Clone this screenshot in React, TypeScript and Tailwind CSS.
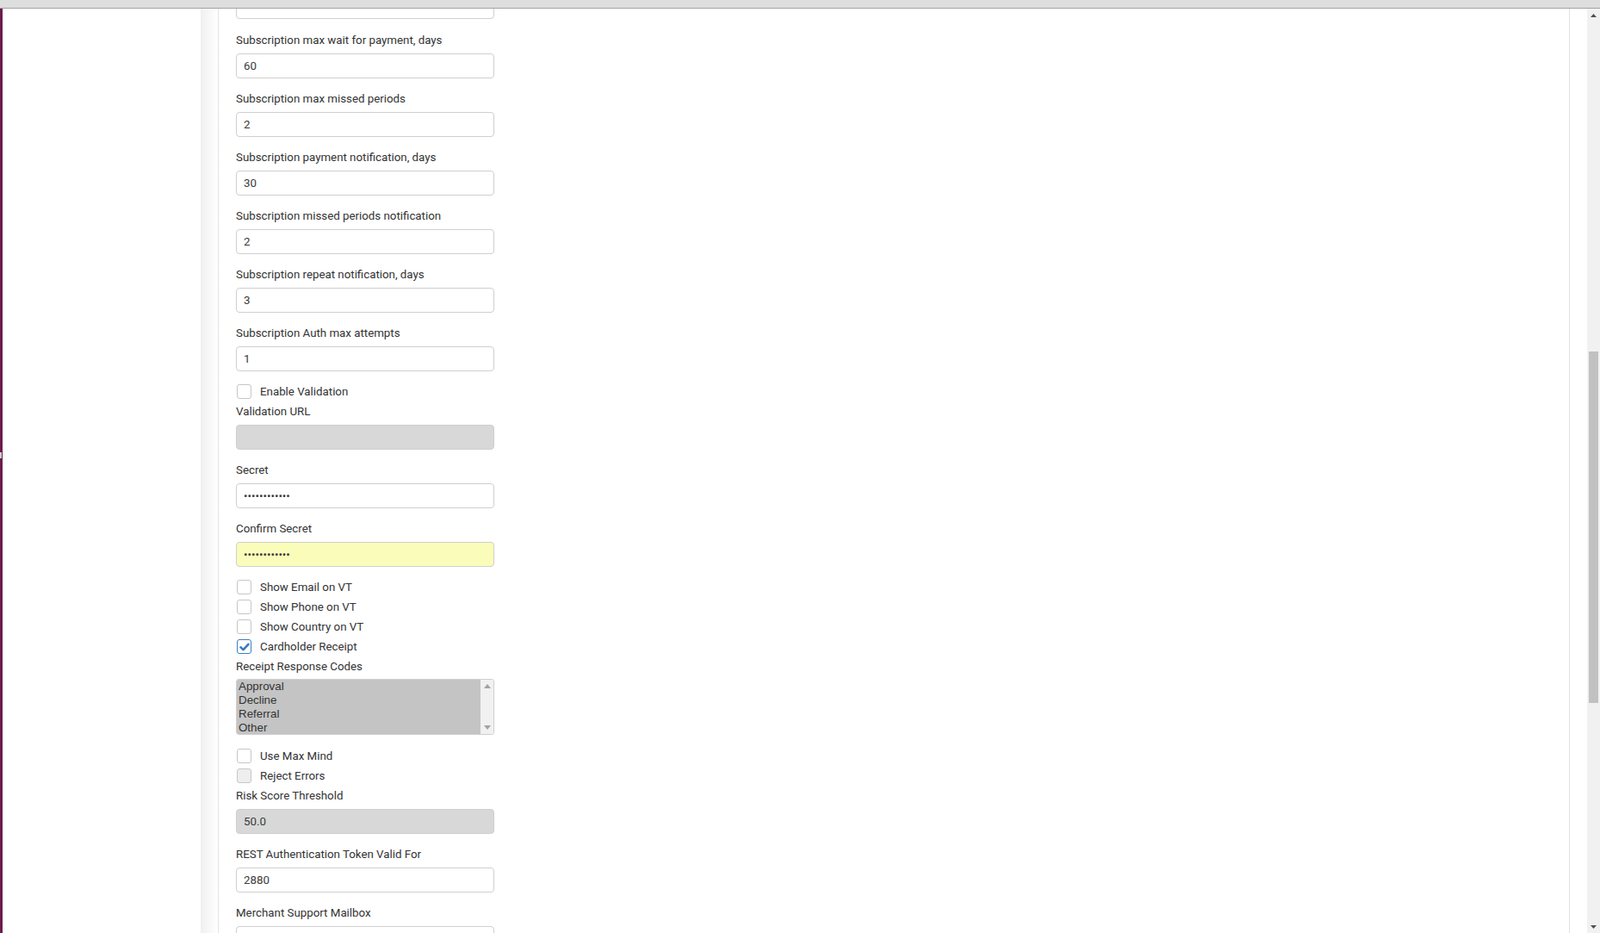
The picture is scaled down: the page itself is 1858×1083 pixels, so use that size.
import React from "react";

function Field({ label, value, disabled, type, yellow }: { label: string; value?: string; disabled?: boolean; type?: string; yellow?: boolean }) {
  const bg = disabled ? "bg-[#d8d8d8]" : yellow ? "bg-[#fafcba]" : "bg-white";
  return (
    <div className="mb-[14px]">
      <div className="text-[13.3px] leading-[19px] text-[#333] mb-[6px]">{label}</div>
      <input
        readOnly
        type={type || "text"}
        value={value || ""}
        className={`block w-full h-[29px] border border-[#cfcfcf] rounded-[4px] px-[8px] text-[13.3px] text-[#3a3a3a] font-['Roboto'] outline-none ${bg}`}
      />
    </div>
  );
}

function Check({ label, checked, disabled }: { label: string; checked?: boolean; disabled?: boolean }) {
  return (
    <div className="flex h-[23px]">
      <div
        className={`ml-[1px] mt-[1px] w-[17px] h-[17px] rounded-[3px] border flex items-center justify-center ${
          checked ? "border-[#3f7fc1] bg-white" : disabled ? "border-[#c6c6c6] bg-[#eeeeee]" : "border-[#c6c6c6] bg-white"
        }`}
      >
        {checked && (
          <svg width="12" height="10" viewBox="0 0 12 10">
            <path d="M1.6 5.4 L4.6 8.2 L10.4 1.8" fill="none" stroke="#3b7cc0" strokeWidth="2.6" strokeLinecap="round" strokeLinejoin="round" />
          </svg>
        )}
      </div>
      <span className="ml-[10px] text-[13.3px] leading-[19px] text-[#333]">{label}</span>
    </div>
  );
}

export default function App() {
  return (
    <div className="w-[1858px] h-[1083px] overflow-hidden bg-white font-['Roboto'] flex flex-col">
      <div className="h-[10px] shrink-0 bg-[#dedede] border-b border-[#a0a0a0]" />
      <div className="flex flex-1 min-h-0">
        <div className="w-[3px] shrink-0 bg-[#6d1b4d] flex flex-col">
          <div className="mt-[515px] h-[7px] w-[2px] bg-[#cfcfcf]" />
        </div>
        <div className="w-[230px] shrink-0 bg-white" />
        <div className="w-[20px] shrink-0 bg-gradient-to-r from-[#f0f0f0] to-white" />
        <div className="w-px shrink-0 bg-[#e4e4e4]" />
        <div className="w-[1568px] shrink-0 overflow-hidden pl-[20px]">
          <div className="w-[300px] mt-[-17px]">
            <div className="mb-[15px]">
              <input readOnly value="" className="block w-full h-[29px] border border-[#cfcfcf] rounded-[4px] bg-white outline-none" />
            </div>
            <Field label="Subscription max wait for payment, days" value="60" />
            <Field label="Subscription max missed periods" value="2" />
            <Field label="Subscription payment notification, days" value="30" />
            <Field label="Subscription missed periods notification" value="2" />
            <Field label="Subscription repeat notification, days" value="3" />
            <Field label="Subscription Auth max attempts" value="1" />
            <Check label="Enable Validation" />
            <Field label="Validation URL" disabled />
            <Field label="Secret" type="password" value="abcdefghijkl" />
            <Field label="Confirm Secret" type="password" value="abcdefghijkl" yellow />
            <Check label="Show Email on VT" />
            <Check label="Show Phone on VT" />
            <Check label="Show Country on VT" />
            <Check label="Cardholder Receipt" checked />
            <div className="mb-[15px]">
              <div className="text-[13.3px] leading-[19px] text-[#333] mb-[5px]">Receipt Response Codes</div>
              <div className="h-[65px] border border-[#cfcfcf] rounded-[3px] flex overflow-hidden">
                <div className="flex-1 bg-[#c4c4c4] pl-[2px] font-['Liberation_Sans'] text-[13.33px] leading-[16px] text-[#333]">
                  <div>Approval</div>
                  <div>Decline</div>
                  <div>Referral</div>
                  <div>Other</div>
                </div>
                <div className="w-[15px] bg-[#f1f1f1] flex flex-col justify-between items-center py-[5px]">
                  <svg width="8" height="5" viewBox="0 0 8 5"><path d="M0 5 L4 0 L8 5 Z" fill="#a3a3a3" /></svg>
                  <svg width="8" height="5" viewBox="0 0 8 5"><path d="M0 0 L4 5 L8 0 Z" fill="#a3a3a3" /></svg>
                </div>
              </div>
            </div>
            <Check label="Use Max Mind" />
            <Check label="Reject Errors" disabled />
            <Field label="Risk Score Threshold" value="50.0" disabled />
            <Field label="REST Authentication Token Valid For" value="2880" />
            <Field label="Merchant Support Mailbox" />
          </div>
        </div>
        <div className="w-px shrink-0 bg-[#e2e2e2]" />
        <div className="w-[20px] shrink-0 bg-white" />
        <div className="w-[15px] shrink-0 bg-[#f1f1f1] flex flex-col">
          <div className="h-[15px] flex items-center justify-center">
            <svg width="7" height="4" viewBox="0 0 7 4"><path d="M0 4 L3.5 0 L7 4 Z" fill="#505050" /></svg>
          </div>
          <div className="mt-[383px] ml-[2px] w-[11px] h-[408px] bg-[#c1c1c1]" />
          <div className="flex-1" />
          <div className="h-[15px] flex items-center justify-center">
            <svg width="7" height="4" viewBox="0 0 7 4"><path d="M0 0 L3.5 4 L7 0 Z" fill="#505050" /></svg>
          </div>
        </div>
      </div>
    </div>
  );
}
